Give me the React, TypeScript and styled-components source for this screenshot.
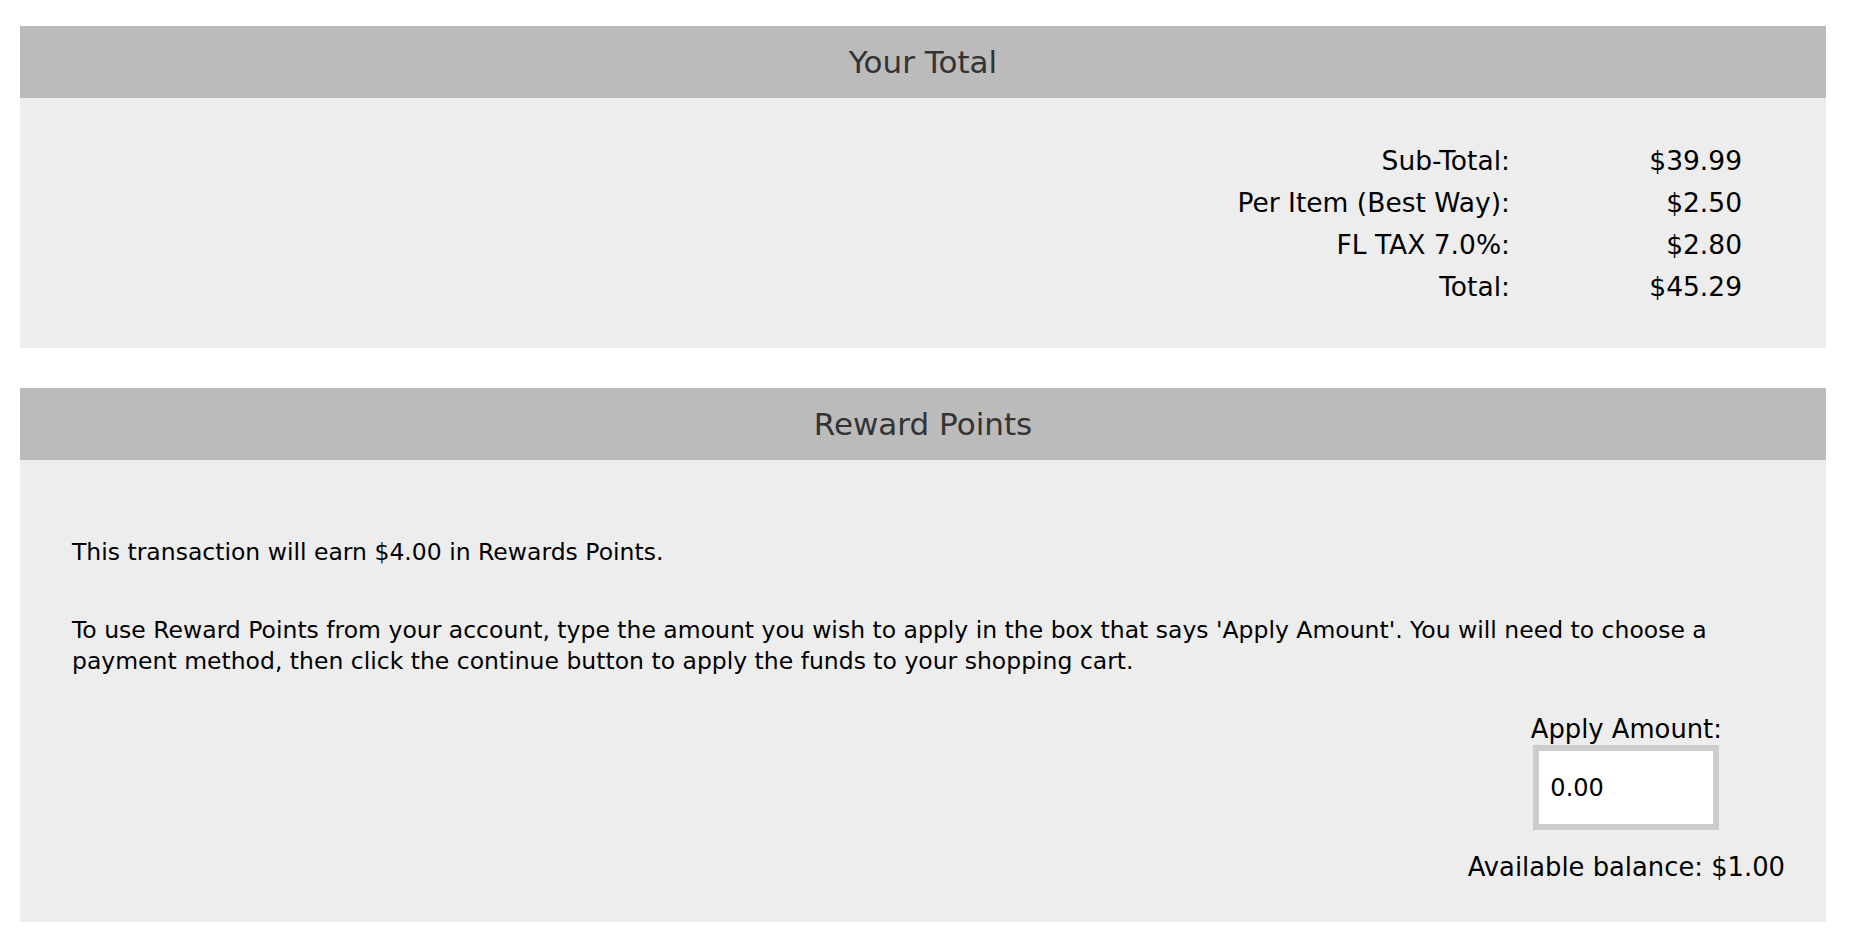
import React, { ReactElement } from "react";
import styled, { createGlobalStyle } from "styled-components";

const GlobalStyle = createGlobalStyle`
  html, body {
    margin: 0;
    padding: 0;
    background: #fff;
  }
  body {
    font-family: "DejaVu Sans", Verdana, sans-serif;
    color: #000;
  }
`;

const Page = styled.div`
  display: flex;
  flex-direction: column;
  gap: 40px;
  padding: 26px 32px 0 20px;
`;

const Section = styled.section`
  display: flex;
  flex-direction: column;
`;

const SectionHeader = styled.h2`
  margin: 0;
  height: 72px;
  line-height: 72px;
  background: #bbbbbb;
  color: #333;
  font-size: 31px;
  font-weight: normal;
  text-align: center;
`;

const TotalsBody = styled.div`
  background: #ededed;
  padding: 42px 84px 40px 52px;
  display: grid;
  grid-template-columns: auto 232px;
  justify-content: end;
  font-size: 26.5px;
`;

const Cell = styled.div`
  height: 42px;
  line-height: 42px;
  text-align: right;
  white-space: nowrap;
`;

const RewardsBody = styled.div`
  background: #ededed;
  padding: 77px 41px 39px 52px;
  display: flex;
  flex-direction: column;
  font-size: 23.5px;
  line-height: 31px;
`;

const Paragraph = styled.p<{ $gap?: number }>`
  margin: 0 0 ${(p) => p.$gap ?? 0}px 0;
`;

const ApplyBlock = styled.div`
  align-self: flex-end;
  display: flex;
  flex-direction: column;
  align-items: center;
  margin-top: 37px;
  font-size: 25.8px;
`;

const AmountInput = styled.input`
  box-sizing: border-box;
  width: 186px;
  height: 85px;
  border: 6px solid #cccccc;
  background: #fff;
  padding: 0 11px;
  font-family: "DejaVu Sans", Verdana, sans-serif;
  font-size: 24px;
  color: #000;
  outline: none;
  margin-bottom: 22px;
`;

const rows: [string, string][] = [
  ["Sub-Total:", "$39.99"],
  ["Per Item (Best Way):", "$2.50"],
  ["FL TAX 7.0%:", "$2.80"],
  ["Total:", "$45.29"],
];

function App(): ReactElement {
  return (
    <>
      <GlobalStyle />
      <Page>
        <Section>
          <SectionHeader>Your Total</SectionHeader>
          <TotalsBody>
            {rows.map(([label, value]) => (
              <React.Fragment key={label}>
                <Cell>{label}</Cell>
                <Cell>{value}</Cell>
              </React.Fragment>
            ))}
          </TotalsBody>
        </Section>
        <Section>
          <SectionHeader>Reward Points</SectionHeader>
          <RewardsBody>
            <Paragraph $gap={47}>
              This transaction will earn $4.00 in Rewards Points.
            </Paragraph>
            <Paragraph>
              To use Reward Points from your account, type the amount you wish
              to apply in the box that says 'Apply Amount'. You will need to
              choose a payment method, then click the continue button to apply
              the funds to your shopping cart.
            </Paragraph>
            <ApplyBlock>
              <div>Apply Amount:</div>
              <AmountInput type="text" defaultValue="0.00" />
              <div>Available balance: $1.00</div>
            </ApplyBlock>
          </RewardsBody>
        </Section>
      </Page>
    </>
  );
}

export default App;
